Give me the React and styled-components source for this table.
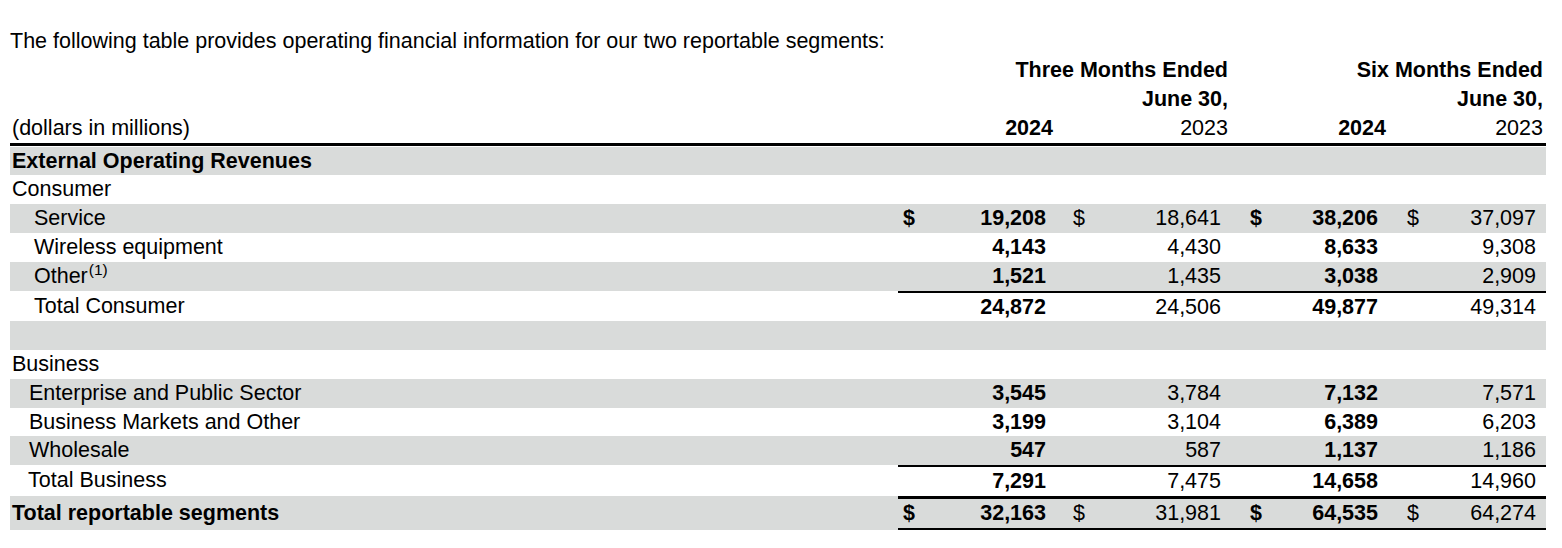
import React from 'react';
import styled, { createGlobalStyle } from 'styled-components';

const Global = createGlobalStyle`
  html, body { margin: 0; padding: 0; background: #fff; }
  body { font-family: "Liberation Sans", Arial, sans-serif; color: #000; }
`;

const COLS = '888px 158px 175px 158px 157px';
const LEADS = [5, 17, 19, 18];
const TAILS = [10, 10, 11, 10];
const SHADE = '#d9dbda';

const Page = styled.div`
  width: 1536px;
  padding: 27px 16px 20px 10px;
  font-size: 21.5px;
`;

const Intro = styled.p`
  margin: 0;
  height: 29px;
  line-height: 29px;
  white-space: nowrap;
`;

const HeadRow = styled.div`
  display: grid;
  grid-template-columns: ${COLS};
  height: 29px;
  line-height: 29px;
  border-bottom: ${p => (p.$rule ? '3px solid #000' : 'none')};
  margin-bottom: ${p => (p.$rule ? '1px' : '0')};
`;

const HeadLabel = styled.div`
  padding-left: 2px;
  white-space: nowrap;
`;

const HeadCell = styled.div`
  grid-column: ${p => p.$span || 'auto'};
  text-align: right;
  padding-right: 3px;
  font-weight: ${p => (p.$bold ? 700 : 400)};
  white-space: nowrap;
`;

const Row = styled.div`
  display: grid;
  grid-template-columns: ${COLS};
  height: ${p => p.$h}px;
  background: ${p => (p.$shade ? SHADE : 'transparent')};
`;

const Label = styled.div`
  display: flex;
  align-items: center;
  padding-left: ${p => p.$indent}px;
  font-weight: ${p => (p.$bold ? 700 : 400)};
  white-space: nowrap;
`;

const Sup = styled.sup`
  font-size: 15.5px;
  line-height: 0;
  position: relative;
  top: -7px;
  vertical-align: baseline;
  margin-left: 1px;
`;

const Value = styled.div`
  display: flex;
  justify-content: space-between;
  align-items: center;
  padding: 0 ${p => p.$tail}px 0 ${p => p.$lead}px;
  font-weight: ${p => (p.$bold ? 700 : 400)};
  border-top: ${p => (p.$top ? `${p.$top}px solid #000` : 'none')};
  border-bottom: ${p => (p.$bottom ? `${p.$bottom}px solid #000` : 'none')};
  white-space: nowrap;
`;

const Dollar = styled.span``;
const Num = styled.span``;

const rows = [
  { label: 'External Operating Revenues', bold: true, shade: true, h: 28, indent: 2 },
  { label: 'Consumer', h: 29, indent: 2 },
  { label: 'Service', shade: true, h: 29, indent: 24, dollar: true, v: ['19,208', '18,641', '38,206', '37,097'] },
  { label: 'Wireless equipment', h: 29, indent: 24, v: ['4,143', '4,430', '8,633', '9,308'] },
  { label: 'Other', sup: '(1)', shade: true, h: 29, indent: 24, v: ['1,521', '1,435', '3,038', '2,909'] },
  { label: 'Total Consumer', h: 30, indent: 24, top: 2, v: ['24,872', '24,506', '49,877', '49,314'] },
  { label: '', shade: true, h: 29, indent: 2 },
  { label: 'Business', h: 29, indent: 2 },
  { label: 'Enterprise and Public Sector', shade: true, h: 29, indent: 19, v: ['3,545', '3,784', '7,132', '7,571'] },
  { label: 'Business Markets and Other', h: 28, indent: 19, v: ['3,199', '3,104', '6,389', '6,203'] },
  { label: 'Wholesale', shade: true, h: 29, indent: 19, v: ['547', '587', '1,137', '1,186'] },
  { label: 'Total Business', h: 31, indent: 18, top: 2, v: ['7,291', '7,475', '14,658', '14,960'] },
  { label: 'Total reportable segments', bold: true, shade: true, h: 34, indent: 2, top: 3, bottom: 2, dollar: true, v: ['32,163', '31,981', '64,535', '64,274'] },
];

export default function App() {
  return (
    <>
      <Global />
      <Page>
        <Intro>The following table provides operating financial information for our two reportable segments:</Intro>
        <HeadRow>
          <div />
          <HeadCell $span="2 / 4" $bold>Three Months Ended</HeadCell>
          <HeadCell $span="4 / 6" $bold>Six Months Ended</HeadCell>
        </HeadRow>
        <HeadRow>
          <div />
          <HeadCell $span="2 / 4" $bold>June 30,</HeadCell>
          <HeadCell $span="4 / 6" $bold>June 30,</HeadCell>
        </HeadRow>
        <HeadRow $rule>
          <HeadLabel>(dollars in millions)</HeadLabel>
          <HeadCell $bold>2024</HeadCell>
          <HeadCell>2023</HeadCell>
          <HeadCell $bold>2024</HeadCell>
          <HeadCell>2023</HeadCell>
        </HeadRow>
        {rows.map((r, i) => (
          <Row key={i} $h={r.h} $shade={r.shade}>
            <Label $indent={r.indent} $bold={r.bold}>
              {r.label}
              {r.sup && <Sup>{r.sup}</Sup>}
            </Label>
            {r.v
              ? r.v.map((n, j) => (
                  <Value
                    key={j}
                    $lead={LEADS[j]}
                    $tail={TAILS[j]}
                    $bold={j % 2 === 0}
                    $top={r.top}
                    $bottom={r.bottom}
                  >
                    <Dollar>{r.dollar ? '$' : ''}</Dollar>
                    <Num>{n}</Num>
                  </Value>
                ))
              : [0, 1, 2, 3].map(j => <div key={j} />)}
          </Row>
        ))}
      </Page>
    </>
  );
}
